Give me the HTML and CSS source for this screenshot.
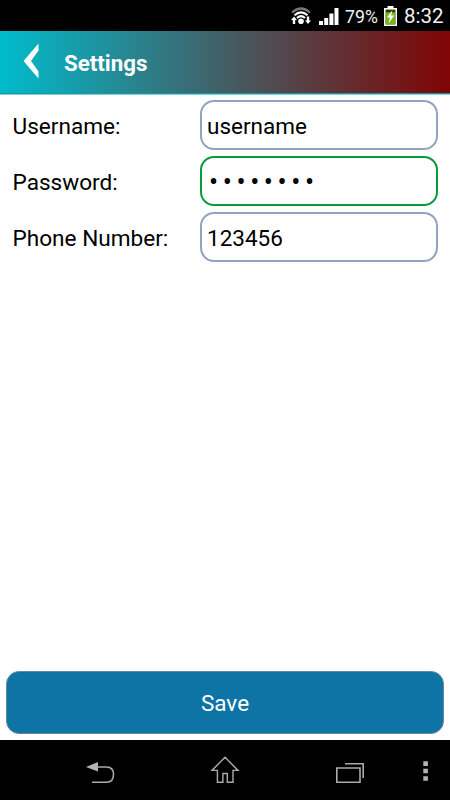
FILE: index.html
```
<!DOCTYPE html>
<html lang="en">
<head>
    <meta charset="UTF-8">
    <title>Settings</title>
    <link rel="stylesheet" href="styles.css">
</head>
<body>

<!-- Status bar -->
<div class="status-bar">
    <svg class="wifi" width="22" height="20" viewBox="0 0 22 20" fill="none">
        <path d="M2 6.5Q11 -1.5 20 6.5" stroke="#777" stroke-width="2.2"/>
        <path d="M4.5 9.3Q11 3.3 17.5 9.3" stroke="#fff" stroke-width="2.2"/>
        <path d="M7 12Q11 8.3 15 12" stroke="#fff" stroke-width="2"/>
        <circle cx="11" cy="15.3" r="2.8" fill="#fff"/>
        <path d="M4 10.5L7 14H5.2V18H2.8V14H1Z" fill="#fff"/>
        <path d="M18 18L15 14.5H16.8V10.5H19.2V14.5H21Z" fill="#fff"/>
    </svg>
    <svg class="signal" width="20" height="17" viewBox="0 0 20 17" fill="#fff">
        <path d="M0 13H4V17H0ZM5.2 10H9.2V17H5.2ZM10.4 5.5H14.4V17H10.4ZM15.5 0H19.5V17H15.5Z"/>
    </svg>
    <span class="percent">79%</span>
    <svg class="battery" width="13" height="20" viewBox="0 0 13 20">
        <path d="M3.5 0H9.5V2H13V20H0V2H3.5Z" fill="#fff"/>
        <rect x="1.6" y="3.6" width="9.8" height="14.8" fill="#26370b"/>
        <rect x="1.6" y="6.3" width="9.8" height="12.1" fill="#78b51c"/>
        <path d="M8.5 4L3 11.5H6L4.5 17.5L10.2 9.5H7.1Z" fill="#fff"/>
    </svg>
    <span class="clock">8:32</span>
</div>

<header class="header">
    <svg class="back" width="16" height="36" viewBox="0 0 16 36">
        <path d="M15.5 0.5V7.5L8 18L15.5 28.5V35.5L0.5 18Z" fill="#fff"/>
    </svg>
    <h1>Settings</h1>
</header>

<form class="settings">
    <div class="row">
        <label for="username">Username:</label>
        <input type="text" id="username" value="username">
    </div>
    <div class="row">
        <label for="password">Password:</label>
        <input type="password" class="active" id="password" value="password">
    </div>
    <div class="row">
        <label for="phone">Phone Number:</label>
        <input type="tel" id="phone" value="123456">
    </div>
    <button type="button" class="save">Save</button>
</form>

<!-- Navigation bar -->
<nav class="nav-bar">
    <svg width="450" height="60" viewBox="0 0 450 60" fill="none" stroke="#aaa" stroke-width="1.6">
        <path d="M86 27L98 22V31.5Z" fill="#b4b4b4" stroke="none"/>
        <path d="M97 27H106.5Q113.5 27 113.5 34.5Q113.5 42.2 106.5 42.2H92"/>
        <path d="M225 17.2L238 30.4H233V42.3H227.3V33.5H222.9V42.3H217.4V30.4H212Z" stroke-width="1.4"/>
        <path d="M336.8 28H360V42.2H336.8Z"/>
        <path d="M345 23.8H363.2V38"/>
        <path d="M423.3 21.3H427.9V25.9H423.3ZM423.3 28.8H427.9V33.3H423.3ZM423.3 36.3H427.9V40.8H423.3Z" fill="#b4b4b4" stroke="none"/>
    </svg>
</nav>

</body>
</html>
```

FILE: styles.css
```
* {
    box-sizing: border-box;
}

body {
    margin: 0;
    height: 800px;
    display: flex;
    flex-direction: column;
    font-family: Roboto, sans-serif;
    background-color: #fff;
    color: #000;
    overflow: hidden;
}

.status-bar {
    height: 31px;
    display: flex;
    align-items: center;
    justify-content: flex-end;
    padding-right: 7px;
    background-color: #000;
    color: #f2f2f2;
}

.signal {
    margin: 1px 6px 0 7px;
}

.percent {
    width: 33px;
    font-size: 17.7px;
    margin-top: 2px;
}

.battery {
    margin: 0 7px 0 6px;
}

.clock {
    width: 39px;
    font-size: 20.5px;
    margin-top: 1px;
}

.header {
    height: 63px;
    display: flex;
    align-items: center;
    padding-left: 23px;
    background: linear-gradient(to right, #00bccd, #435e65 50%, #800404);
    border-bottom: 1px solid #1697a6;
    box-shadow: 0 1px 0 #84d0d9;
    color: #fff;
}

.back {
    margin-bottom: 2px;
}

.header h1 {
    margin: 1px 0 0 25px;
    font-size: 22.3px;
    font-weight: bold;
}

.settings {
    flex: 1;
    display: flex;
    flex-direction: column;
    gap: 6px;
    padding: 6px 6px 6px;
}

.row {
    display: grid;
    grid-template-columns: 187px 238px;
    align-items: center;
    padding-left: 7px;
}

label {
    margin-left: -0.5px;
    font-size: 22.6px;
    padding-top: 2px;
}

input {
    width: 238px;
    height: 50px;
    padding: 2px 5px 0;
    border: 2px solid #93a2bf;
    border-radius: 14px;
    background-color: #fff;
    font-family: inherit;
    font-size: 22.5px;
    color: #000;
    outline: none;
}

input.active {
    border-color: #099a3c;
}

input[type="password"] {
    padding: 2px 7px 0;
    font-size: 27px;
    letter-spacing: 4.6px;
}

.save {
    height: 63px;
    margin-top: auto;
    border: 1px solid #6688a5;
    border-radius: 13px;
    background-color: #0e74a5;
    color: #fff;
    font-family: inherit;
    font-size: 22.5px;
}

.nav-bar {
    height: 60px;
    background-color: #000;
}
```
